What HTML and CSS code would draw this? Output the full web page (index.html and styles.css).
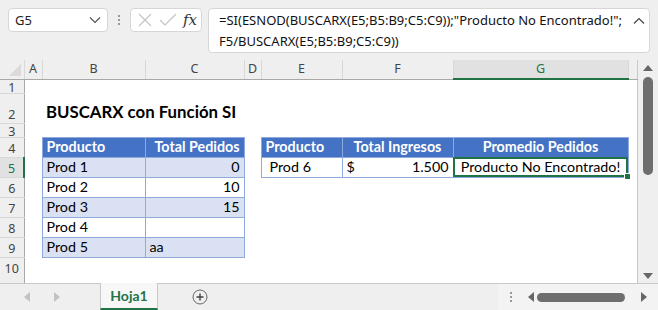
FILE: index.html
```html
<!DOCTYPE html>
<html lang="es">
  <head>
    <meta charset="UTF-8" />
    <title>BUSCARX con Función SI</title>
    <link rel="stylesheet" href="styles.css">
  </head>
  <body>
    <div class="topbar">
      <div class="namebox">
        <span>G5</span>
        <svg width="12" height="8" viewBox="0 0 12 8"><path d="M1 1.5 L6 6.5 L11 1.5" fill="none" stroke="#555" stroke-width="1.2"/></svg>
      </div>
      <div class="grip"><i></i><i></i><i></i></div>
      <div class="fxbox">
        <svg width="16" height="16" viewBox="0 0 16 16"><path d="M2 2 L14 14 M14 2 L2 14" stroke="#c4c4c4" stroke-width="1.2"/></svg>
        <svg width="18" height="16" viewBox="0 0 18 16"><path d="M1 8 L6 13 L17 2" fill="none" stroke="#c4c4c4" stroke-width="1.2"/></svg>
        <span class="fx">fx</span>
      </div>
      <div class="formula">
        <div class="ftext">=SI(ESNOD(BUSCARX(E5;B5:B9;C5:C9));"Producto No Encontrado!";<br>F5/BUSCARX(E5;B5:B9;C5:C9))</div>
        <svg width="12" height="8" viewBox="0 0 12 8"><path d="M1 6.5 L6 1.5 L11 6.5" fill="none" stroke="#444" stroke-width="1.2"/></svg>
      </div>
    </div>

    <div class="main">
      <table class="sheet">
        <colgroup>
          <col style="width:24px"><col style="width:18px"><col style="width:103px"><col style="width:99px"><col style="width:17px"><col style="width:81px"><col style="width:111px"><col style="width:175px"><col>
        </colgroup>
        <tr class="colhdr">
          <th class="corner"><span class="tri"></span></th>
          <th>A</th><th>B</th><th>C</th><th>D</th><th>E</th><th>F</th><th class="sel">G</th><th class="last"></th>
        </tr>
        <tr class="r-sm">
          <th class="rowhdr">1</th><td></td><td></td><td></td><td></td><td></td><td></td><td></td><td></td>
        </tr>
        <tr class="r-title">
          <th class="rowhdr">2</th><td></td><td class="title">BUSCARX con Función SI</td><td></td><td></td><td></td><td></td><td></td><td></td>
        </tr>
        <tr class="r-sm">
          <th class="rowhdr">3</th><td></td><td></td><td></td><td></td><td></td><td></td><td></td><td></td>
        </tr>
        <tr>
          <th class="rowhdr">4</th><td></td>
          <td class="tb head">Producto</td><td class="tb head right">Total Pedidos</td>
          <td></td>
          <td class="tb head">Producto</td><td class="tb head center">Total Ingresos</td><td class="tb head center">Promedio Pedidos</td>
          <td></td>
        </tr>
        <tr>
          <th class="rowhdr selrow">5</th><td></td>
          <td class="tb band">Prod 1</td><td class="tb band right">0</td>
          <td></td>
          <td class="tb indent">Prod 6</td>
          <td class="tb money"><span>$</span><span>1.500</span></td>
          <td class="tb center active">Producto No Encontrado!</td>
          <td></td>
        </tr>
        <tr>
          <th class="rowhdr">6</th><td></td>
          <td class="tb">Prod 2</td><td class="tb right">10</td>
          <td></td><td></td><td></td><td></td><td></td>
        </tr>
        <tr>
          <th class="rowhdr">7</th><td></td>
          <td class="tb band">Prod 3</td><td class="tb band right">15</td>
          <td></td><td></td><td></td><td></td><td></td>
        </tr>
        <tr>
          <th class="rowhdr">8</th><td></td>
          <td class="tb">Prod 4</td><td class="tb"></td>
          <td></td><td></td><td></td><td></td><td></td>
        </tr>
        <tr>
          <th class="rowhdr">9</th><td></td>
          <td class="tb band">Prod 5</td><td class="tb band">aa</td>
          <td></td><td></td><td></td><td></td><td></td>
        </tr>
        <tr class="r-last">
          <th class="rowhdr">10</th><td></td><td></td><td></td><td></td><td></td><td></td><td></td><td></td>
        </tr>
      </table>

      <div class="vscroll">
        <span class="arrow up"></span>
        <div class="vthumb"></div>
        <span class="arrow down"></span>
      </div>
    </div>

    <div class="tabbar">
      <div class="tabnav">
        <span class="arrow left light"></span>
        <span class="arrow right light"></span>
      </div>
      <div class="tab">Hoja1</div>
      <div class="addsheet">
        <svg width="16" height="16" viewBox="0 0 16 16"><circle cx="8" cy="8" r="7" fill="none" stroke="#666" stroke-width="1"/><path d="M8 4.5 V11.5 M4.5 8 H11.5" stroke="#444" stroke-width="1.4"/></svg>
      </div>
      <div class="hscroll">
        <div class="grip small"><i></i><i></i><i></i></div>
        <span class="arrow left"></span>
        <div class="hthumb"></div>
        <span class="arrow right"></span>
      </div>
    </div>
  </body>
</html>
```

FILE: styles.css
```css
body,
html {
  margin: 0;
  width: 658px;
  height: 310px;
  overflow: hidden;
  background: #efefef;
  font-family: "Noto Sans", Arial, sans-serif;
}

/* formula bar */
.topbar {
  height: 60px;
  box-sizing: border-box;
  padding: 8px 8px 0;
  display: flex;
  align-items: flex-start;
}
.namebox {
  width: 100px;
  height: 24px;
  box-sizing: border-box;
  background: #fff;
  border: 1px solid #d6d6d6;
  border-radius: 4px;
  display: flex;
  align-items: center;
  justify-content: space-between;
  padding: 0 6px 0 6px;
  font-size: 13px;
  color: #222;
}
.grip {
  width: 22px;
  height: 24px;
  display: flex;
  flex-direction: column;
  align-items: center;
  justify-content: center;
  gap: 2px;
}
.grip i {
  width: 2px;
  height: 2px;
  background: #999;
  display: block;
}
.fxbox {
  width: 72px;
  height: 24px;
  box-sizing: border-box;
  background: #fff;
  border: 1px solid #d6d6d6;
  border-radius: 4px;
  display: flex;
  align-items: center;
  justify-content: space-between;
  padding: 0 4px 0 6px;
}
.fx {
  font-family: "DejaVu Serif", "Liberation Serif", serif;
  font-style: italic;
  font-size: 15px;
  color: #333;
}
.formula {
  margin-left: 6px;
  width: 442px;
  height: 45px;
  box-sizing: border-box;
  background: #fff;
  border: 1px solid #d6d6d6;
  border-radius: 4px;
  display: flex;
  justify-content: space-between;
  padding: 1px 4px 0 10px;
}
.ftext {
  font-size: 13px;
  line-height: 21px;
  color: #111;
  white-space: nowrap;
}
.formula svg {
  flex-shrink: 0;
  margin-top: 7px;
}

/* sheet */
.main {
  display: flex;
  height: 223px;
}
.sheet {
  width: 638px;
  height: 223px;
  table-layout: fixed;
  border-collapse: collapse;
  background: #fff;
  font-family: Lato, "Liberation Sans", sans-serif;
  font-size: 14.3px;
  color: #000;
  border-right: 1px solid #c8c8c8;
}
.sheet tr {
  height: 20px;
}
.sheet td {
  padding: 0 4px;
  white-space: nowrap;
  overflow: visible;
  line-height: 16px;
}
.sheet th {
  font-family: "Noto Sans", Arial, sans-serif;
  font-weight: normal;
  font-size: 12.5px;
  line-height: 14px;
  color: #444;
  background: #efefef;
  padding: 0;
}
.sheet tr.colhdr {
  height: 19px;
}
.colhdr th {
  border-right: 1px solid #d8d8d8;
  border-bottom: 1px solid #a8a8a8;
}
.colhdr th.last {
  border-right: none;
}
.colhdr th.sel {
  background: #e1e1e1;
  color: #217346;
  border-bottom: 2px solid #217346;
}
.corner {
  position: relative;
}
.tri {
  position: absolute;
  right: 3px;
  bottom: 3px;
  border-left: 12px solid transparent;
  border-bottom: 12px solid #dadada;
}
.rowhdr {
  border-right: 1px solid #a8a8a8;
  border-bottom: 1px solid #d8d8d8;
  vertical-align: bottom;
  padding-bottom: 1px !important;
}
.rowhdr.selrow {
  background: #e1e1e1;
  color: #217346;
  border-right: 2px solid #217346;
}
.sheet tr.r-sm {
  height: 14px;
}
.r-sm td {
  line-height: 10px;
}
.sheet .r-sm th {
  line-height: 11px;
  padding-bottom: 0 !important;
}
.sheet tr.r-title {
  height: 30px;
}
.sheet tr.r-last {
  height: 26px;
}
.r-last th {
  vertical-align: top;
  padding-top: 4px !important;
  border-bottom: none;
}
.title {
  font-weight: bold;
  font-size: 16.8px;
  vertical-align: bottom;
  padding-bottom: 3px !important;
}

/* excel tables */
.tb {
  border: 1px solid #8ea9db;
}
.tb.head {
  background: #4472c4;
  color: #fff;
  font-weight: bold;
}
.tb.band {
  background: #d9e1f2;
}
.right {
  text-align: right;
}
.center {
  text-align: center;
}
.indent {
  padding-left: 8px !important;
}
.money span:last-child {
  float: right;
}
.active {
  position: relative;
  outline: 2px solid #217346;
  outline-offset: -2px;
}
.active::after {
  content: "";
  position: absolute;
  right: -3px;
  bottom: -3px;
  width: 5px;
  height: 5px;
  background: #217346;
  border: 1px solid #fff;
}

/* scrollbars and arrows */
.arrow {
  width: 0;
  height: 0;
  display: block;
}
.arrow.up {
  border-left: 5px solid transparent;
  border-right: 5px solid transparent;
  border-bottom: 6px solid #666;
}
.arrow.down {
  border-left: 5px solid transparent;
  border-right: 5px solid transparent;
  border-top: 6px solid #666;
}
.arrow.left {
  border-top: 5px solid transparent;
  border-bottom: 5px solid transparent;
  border-right: 6px solid #666;
}
.arrow.right {
  border-top: 5px solid transparent;
  border-bottom: 5px solid transparent;
  border-left: 6px solid #666;
}
.arrow.light.left {
  border-right-color: #c2c2c2;
}
.arrow.light.right {
  border-left-color: #c2c2c2;
}
.vscroll {
  width: 20px;
  display: flex;
  flex-direction: column;
  align-items: center;
  padding-top: 5px;
  gap: 6px;
}
.vthumb {
  width: 10px;
  height: 98px;
  border-radius: 5px;
  background: #6e6e6e;
}
.vscroll .down {
  margin-top: auto;
  margin-bottom: 4px;
}

/* sheet tabs */
.tabbar {
  height: 27px;
  display: flex;
  align-items: stretch;
  border-top: 1px solid #c8c8c8;
  box-sizing: border-box;
}
.tabnav {
  width: 100px;
  display: flex;
  align-items: center;
  gap: 24px;
  padding-left: 24px;
  box-sizing: border-box;
}
.tab {
  width: 58px;
  box-sizing: border-box;
  margin-top: -1px;
  border-left: 1px solid #c8c8c8;
  border-right: 1px solid #c8c8c8;
  border-bottom: 2px solid #217346;
  background: #f7f7f7;
  color: #217346;
  font-family: Lato, "Liberation Sans", sans-serif;
  font-weight: bold;
  font-size: 14px;
  display: flex;
  align-items: center;
  justify-content: center;
}
.addsheet {
  margin-left: 34px;
  display: flex;
  align-items: center;
}
.hscroll {
  margin-left: auto;
  width: 160px;
  display: flex;
  align-items: center;
  padding-left: 10px;
  box-sizing: border-box;
  background: #f3f3f3;
}
.grip.small {
  width: 6px;
  margin-right: 14px;
}
.hthumb {
  width: 88px;
  height: 9px;
  border-radius: 5px;
  background: #6e6e6e;
  margin: 0 16px 0 3px;
}
```
